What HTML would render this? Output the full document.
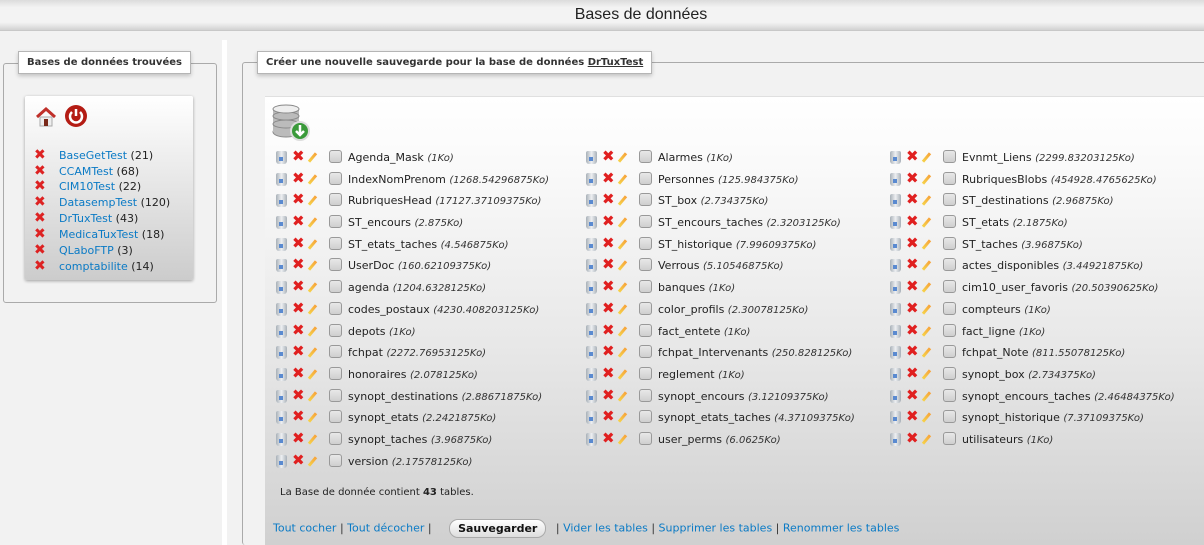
<!DOCTYPE html>
<html><head><meta charset="utf-8">
<style>
*{margin:0;padding:0;box-sizing:border-box}
html{width:1204px;height:545px;overflow:hidden}
body{width:1204px;height:545px;overflow:hidden;background:#f2f2f2;font-family:"DejaVu Sans","Liberation Sans",sans-serif;position:relative;color:#222}
#top{position:absolute;left:0;top:0;width:1204px;height:31px;background:linear-gradient(#dcdcdc,#f3f3f3 25%,#f3f3f3 75%,#d2d2d2);border-bottom:1px solid #c8c8c8;text-align:center;font:16px "Liberation Sans",sans-serif;line-height:29px;color:#222;padding-left:78px}
#strip{position:absolute;left:222px;top:40px;width:5px;height:505px;background:#fff}
.fs{position:absolute;border:1px solid #aaa;border-radius:3px}
.lg{position:absolute;background:#fff;border:1px solid #b5b5b5;box-shadow:0 2px 4px rgba(0,0,0,.2);font-weight:bold;font-size:10px;color:#333;line-height:20px;padding:0 8px;white-space:nowrap}
#lbox{position:absolute;left:25px;top:96px;width:168px;height:184px;background:linear-gradient(#fff,#ccc);box-shadow:0 1px 3px rgba(0,0,0,.35);border-radius:2px}
#lbox .it{position:absolute;left:9px;font-size:11px;line-height:16px;white-space:nowrap}
a{color:#0a7ac5;text-decoration:none}
.x{display:inline-block;width:13px;color:#d22;font-weight:bold;font-size:14px;margin-right:12px}
#rbox{position:absolute;left:265px;top:96px;width:940px;height:449px;background:linear-gradient(#fff,#fafafa 15%,#e8e8e8 55%,#d0d0d0);border-top:1px solid #e0e0e0}
.col{position:absolute;top:147px}
.r{height:21.7px;line-height:21.7px;font-size:11px;white-space:nowrap;position:relative;padding-left:72px}
.r i{font-size:10px;color:#333}
.ic{position:absolute;top:4px;left:0;width:72px;height:14px}
.tr{position:absolute;left:0;top:0;width:11px;height:13px;background:linear-gradient(90deg,#a8b0b8,#eef0f2,#a8b0b8);border-radius:2px 2px 3px 3px}
.tr:after{content:"";position:absolute;left:3px;top:6px;width:4px;height:4px;background:#5a8ad0}
.xx{position:absolute;left:16px;top:-4px;color:#e02020;font-weight:bold;font-size:15px;line-height:18px}
.pe{position:absolute;left:35px;top:1px;width:3px;height:11px;background:linear-gradient(#f7a23a,#f6d34a);transform:rotate(40deg)}
.cb{position:absolute;left:53px;top:-1px;width:13px;height:13px;border:1px solid #999;border-radius:3px;background:linear-gradient(#e8e8e8,#cfcfcf)}
</style></head><body>
<div id="top">Bases de données</div>
<div id="strip"></div>
<div class="fs" style="left:3px;top:63px;width:214px;height:240px"></div>
<div class="lg" style="left:18px;top:51px;height:23px;line-height:21px">Bases de données trouvées</div>
<div id="lbox">
<svg style="position:absolute;left:10px;top:10px" width="22" height="22" viewBox="0 0 22 22"><path d="M2 11 L11 3 L20 11" stroke="#c0302a" stroke-width="3" fill="none"/><rect x="5" y="11" width="12" height="9" fill="#eee" stroke="#aaa"/><rect x="9" y="13" width="4" height="7" fill="#7a2a1a"/></svg>
<svg style="position:absolute;left:39px;top:8px" width="24" height="24" viewBox="0 0 24 24"><circle cx="12" cy="12" r="11" fill="#b41c14"/><path d="M8 8 A6 6 0 1 0 16 8" stroke="#fff" stroke-width="2.5" fill="none"/><path d="M12 5 V12" stroke="#fff" stroke-width="2.5"/></svg>
<div class="it" style="top:51px"><span class="x">✖</span><a>BaseGetTest</a> (21)</div>
<div class="it" style="top:67px"><span class="x">✖</span><a>CCAMTest</a> (68)</div>
<div class="it" style="top:82px"><span class="x">✖</span><a>CIM10Test</a> (22)</div>
<div class="it" style="top:98px"><span class="x">✖</span><a>DatasempTest</a> (120)</div>
<div class="it" style="top:114px"><span class="x">✖</span><a>DrTuxTest</a> (43)</div>
<div class="it" style="top:130px"><span class="x">✖</span><a>MedicaTuxTest</a> (18)</div>
<div class="it" style="top:146px"><span class="x">✖</span><a>QLaboFTP</a> (3)</div>
<div class="it" style="top:162px"><span class="x">✖</span><a>comptabilite</a> (14)</div>
</div>

<div class="fs" style="left:242px;top:62px;width:970px;height:483px;border-bottom:none"></div>
<div class="lg" style="left:257px;top:51px;height:23px;line-height:21px">Créer une nouvelle sauvegarde pour la base de données <u>DrTuxTest</u></div>
<div id="rbox"></div>
<svg style="position:absolute;left:272px;top:104px" width="40" height="38" viewBox="0 0 40 38"><g fill="#bbb" stroke="#888"><ellipse cx="14" cy="28" rx="13" ry="5"/><rect x="1" y="5" width="26" height="23" stroke="none"/><ellipse cx="14" cy="20" rx="13" ry="4"/><ellipse cx="14" cy="12" rx="13" ry="4"/><ellipse cx="14" cy="5" rx="13" ry="4" fill="#eee"/></g><circle cx="28" cy="27" r="9" fill="#3a9a3a" stroke="#ddd" stroke-width="2"/><path d="M28 21 V31 M24 27 L28 31 L32 27" stroke="#fff" stroke-width="2.5" fill="none"/></svg>

<div class="col" style="left:276px">
<div class="r"><span class="ic"><b class="tr"></b><b class="xx">✖</b><b class="pe"></b><b class="cb"></b></span>Agenda_Mask <i>(1Ko)</i></div>
<div class="r"><span class="ic"><b class="tr"></b><b class="xx">✖</b><b class="pe"></b><b class="cb"></b></span>IndexNomPrenom <i>(1268.54296875Ko)</i></div>
<div class="r"><span class="ic"><b class="tr"></b><b class="xx">✖</b><b class="pe"></b><b class="cb"></b></span>RubriquesHead <i>(17127.37109375Ko)</i></div>
<div class="r"><span class="ic"><b class="tr"></b><b class="xx">✖</b><b class="pe"></b><b class="cb"></b></span>ST_encours <i>(2.875Ko)</i></div>
<div class="r"><span class="ic"><b class="tr"></b><b class="xx">✖</b><b class="pe"></b><b class="cb"></b></span>ST_etats_taches <i>(4.546875Ko)</i></div>
<div class="r"><span class="ic"><b class="tr"></b><b class="xx">✖</b><b class="pe"></b><b class="cb"></b></span>UserDoc <i>(160.62109375Ko)</i></div>
<div class="r"><span class="ic"><b class="tr"></b><b class="xx">✖</b><b class="pe"></b><b class="cb"></b></span>agenda <i>(1204.6328125Ko)</i></div>
<div class="r"><span class="ic"><b class="tr"></b><b class="xx">✖</b><b class="pe"></b><b class="cb"></b></span>codes_postaux <i>(4230.408203125Ko)</i></div>
<div class="r"><span class="ic"><b class="tr"></b><b class="xx">✖</b><b class="pe"></b><b class="cb"></b></span>depots <i>(1Ko)</i></div>
<div class="r"><span class="ic"><b class="tr"></b><b class="xx">✖</b><b class="pe"></b><b class="cb"></b></span>fchpat <i>(2272.76953125Ko)</i></div>
<div class="r"><span class="ic"><b class="tr"></b><b class="xx">✖</b><b class="pe"></b><b class="cb"></b></span>honoraires <i>(2.078125Ko)</i></div>
<div class="r"><span class="ic"><b class="tr"></b><b class="xx">✖</b><b class="pe"></b><b class="cb"></b></span>synopt_destinations <i>(2.88671875Ko)</i></div>
<div class="r"><span class="ic"><b class="tr"></b><b class="xx">✖</b><b class="pe"></b><b class="cb"></b></span>synopt_etats <i>(2.2421875Ko)</i></div>
<div class="r"><span class="ic"><b class="tr"></b><b class="xx">✖</b><b class="pe"></b><b class="cb"></b></span>synopt_taches <i>(3.96875Ko)</i></div>
<div class="r"><span class="ic"><b class="tr"></b><b class="xx">✖</b><b class="pe"></b><b class="cb"></b></span>version <i>(2.17578125Ko)</i></div>
</div>

<div class="col" style="left:586px">
<div class="r"><span class="ic"><b class="tr"></b><b class="xx">✖</b><b class="pe"></b><b class="cb"></b></span>Alarmes <i>(1Ko)</i></div>
<div class="r"><span class="ic"><b class="tr"></b><b class="xx">✖</b><b class="pe"></b><b class="cb"></b></span>Personnes <i>(125.984375Ko)</i></div>
<div class="r"><span class="ic"><b class="tr"></b><b class="xx">✖</b><b class="pe"></b><b class="cb"></b></span>ST_box <i>(2.734375Ko)</i></div>
<div class="r"><span class="ic"><b class="tr"></b><b class="xx">✖</b><b class="pe"></b><b class="cb"></b></span>ST_encours_taches <i>(2.3203125Ko)</i></div>
<div class="r"><span class="ic"><b class="tr"></b><b class="xx">✖</b><b class="pe"></b><b class="cb"></b></span>ST_historique <i>(7.99609375Ko)</i></div>
<div class="r"><span class="ic"><b class="tr"></b><b class="xx">✖</b><b class="pe"></b><b class="cb"></b></span>Verrous <i>(5.10546875Ko)</i></div>
<div class="r"><span class="ic"><b class="tr"></b><b class="xx">✖</b><b class="pe"></b><b class="cb"></b></span>banques <i>(1Ko)</i></div>
<div class="r"><span class="ic"><b class="tr"></b><b class="xx">✖</b><b class="pe"></b><b class="cb"></b></span>color_profils <i>(2.30078125Ko)</i></div>
<div class="r"><span class="ic"><b class="tr"></b><b class="xx">✖</b><b class="pe"></b><b class="cb"></b></span>fact_entete <i>(1Ko)</i></div>
<div class="r"><span class="ic"><b class="tr"></b><b class="xx">✖</b><b class="pe"></b><b class="cb"></b></span>fchpat_Intervenants <i>(250.828125Ko)</i></div>
<div class="r"><span class="ic"><b class="tr"></b><b class="xx">✖</b><b class="pe"></b><b class="cb"></b></span>reglement <i>(1Ko)</i></div>
<div class="r"><span class="ic"><b class="tr"></b><b class="xx">✖</b><b class="pe"></b><b class="cb"></b></span>synopt_encours <i>(3.12109375Ko)</i></div>
<div class="r"><span class="ic"><b class="tr"></b><b class="xx">✖</b><b class="pe"></b><b class="cb"></b></span>synopt_etats_taches <i>(4.37109375Ko)</i></div>
<div class="r"><span class="ic"><b class="tr"></b><b class="xx">✖</b><b class="pe"></b><b class="cb"></b></span>user_perms <i>(6.0625Ko)</i></div>
</div>

<div class="col" style="left:890px">
<div class="r"><span class="ic"><b class="tr"></b><b class="xx">✖</b><b class="pe"></b><b class="cb"></b></span>Evnmt_Liens <i>(2299.83203125Ko)</i></div>
<div class="r"><span class="ic"><b class="tr"></b><b class="xx">✖</b><b class="pe"></b><b class="cb"></b></span>RubriquesBlobs <i>(454928.4765625Ko)</i></div>
<div class="r"><span class="ic"><b class="tr"></b><b class="xx">✖</b><b class="pe"></b><b class="cb"></b></span>ST_destinations <i>(2.96875Ko)</i></div>
<div class="r"><span class="ic"><b class="tr"></b><b class="xx">✖</b><b class="pe"></b><b class="cb"></b></span>ST_etats <i>(2.1875Ko)</i></div>
<div class="r"><span class="ic"><b class="tr"></b><b class="xx">✖</b><b class="pe"></b><b class="cb"></b></span>ST_taches <i>(3.96875Ko)</i></div>
<div class="r"><span class="ic"><b class="tr"></b><b class="xx">✖</b><b class="pe"></b><b class="cb"></b></span>actes_disponibles <i>(3.44921875Ko)</i></div>
<div class="r"><span class="ic"><b class="tr"></b><b class="xx">✖</b><b class="pe"></b><b class="cb"></b></span>cim10_user_favoris <i>(20.50390625Ko)</i></div>
<div class="r"><span class="ic"><b class="tr"></b><b class="xx">✖</b><b class="pe"></b><b class="cb"></b></span>compteurs <i>(1Ko)</i></div>
<div class="r"><span class="ic"><b class="tr"></b><b class="xx">✖</b><b class="pe"></b><b class="cb"></b></span>fact_ligne <i>(1Ko)</i></div>
<div class="r"><span class="ic"><b class="tr"></b><b class="xx">✖</b><b class="pe"></b><b class="cb"></b></span>fchpat_Note <i>(811.55078125Ko)</i></div>
<div class="r"><span class="ic"><b class="tr"></b><b class="xx">✖</b><b class="pe"></b><b class="cb"></b></span>synopt_box <i>(2.734375Ko)</i></div>
<div class="r"><span class="ic"><b class="tr"></b><b class="xx">✖</b><b class="pe"></b><b class="cb"></b></span>synopt_encours_taches <i>(2.46484375Ko)</i></div>
<div class="r"><span class="ic"><b class="tr"></b><b class="xx">✖</b><b class="pe"></b><b class="cb"></b></span>synopt_historique <i>(7.37109375Ko)</i></div>
<div class="r"><span class="ic"><b class="tr"></b><b class="xx">✖</b><b class="pe"></b><b class="cb"></b></span>utilisateurs <i>(1Ko)</i></div>
</div>

<div style="position:absolute;left:280px;top:486px;font-size:10px;line-height:14px">La Base de donnée contient <b>43</b> tables.</div>
<div style="position:absolute;left:273px;top:519px;font-size:11px;line-height:18px;white-space:nowrap;color:#333"><a>Tout cocher</a> | <a>Tout décocher</a> | <span style="display:inline-block;margin:0 6px 0 14px;padding:0 8px;height:19px;line-height:17px;border:1px solid #aaa;border-radius:9px;background:linear-gradient(#fff,#ddd);font-weight:bold;color:#111;vertical-align:middle">Sauvegarder</span> | <a>Vider les tables</a> | <a>Supprimer les tables</a> | <a>Renommer les tables</a></div>
</body></html>
